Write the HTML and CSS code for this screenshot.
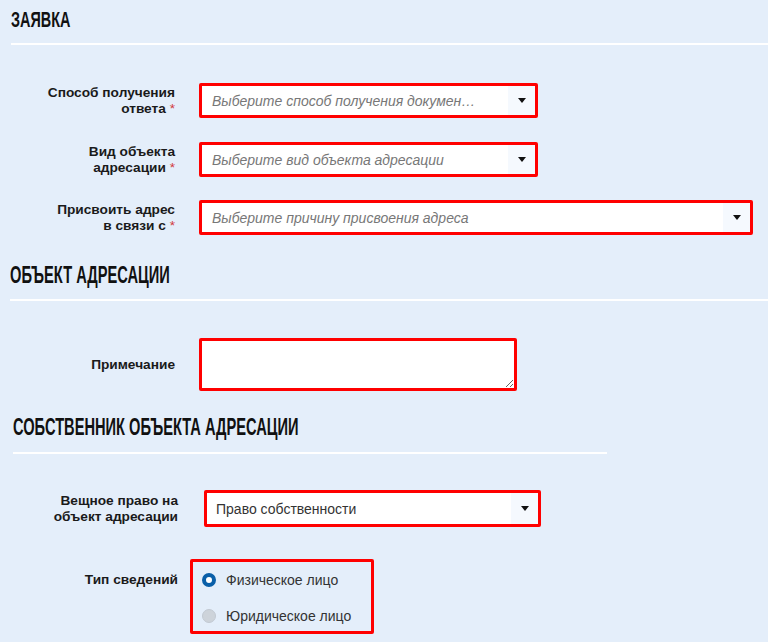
FILE: index.html
```html
<!DOCTYPE html>
<html lang="ru">
<head>
<meta charset="utf-8">
<link rel="stylesheet" href="styles.css">
</head>
<body>
<div class="page">
  <div class="section-head head-1">
    <div class="title t1">ЗАЯВКА</div>
    <div class="rule"></div>
  </div>

  <div class="form-row row-1">
    <div class="label">Способ получения<br>ответа <span class="req">*</span></div>
    <div class="select w-339">
      <span class="placeholder">Выберите способ получения докумен…</span>
      <span class="arrow"><span class="tri"></span></span>
    </div>
  </div>

  <div class="form-row row-2">
    <div class="label">Вид объекта<br>адресации <span class="req">*</span></div>
    <div class="select w-339">
      <span class="placeholder">Выберите вид объекта адресации</span>
      <span class="arrow"><span class="tri"></span></span>
    </div>
  </div>

  <div class="form-row row-3">
    <div class="label">Присвоить адрес<br>в связи с <span class="req">*</span></div>
    <div class="select w-554">
      <span class="placeholder">Выберите причину присвоения адреса</span>
      <span class="arrow"><span class="tri"></span></span>
    </div>
  </div>

  <div class="section-head head-2">
    <div class="title t2">ОБЪЕКТ АДРЕСАЦИИ</div>
    <div class="rule"></div>
  </div>

  <div class="form-row row-note">
    <div class="label">Примечание</div>
    <textarea class="note"></textarea>
  </div>

  <div class="section-head head-3">
    <div class="title t3">СОБСТВЕННИК ОБЪЕКТА АДРЕСАЦИИ</div>
    <div class="rule short"></div>
  </div>

  <div class="form-row row-4">
    <div class="label wide">Вещное право на<br>объект адресации</div>
    <div class="select w-337">
      <span class="value">Право собственности</span>
      <span class="arrow"><span class="tri"></span></span>
    </div>
  </div>

  <div class="form-row row-radio">
    <div class="label wide radio-label">Тип сведений</div>
    <div class="radio-box">
      <div class="radio-item"><span class="radio checked"></span><span class="radio-text">Физическое лицо</span></div>
      <div class="radio-item"><span class="radio"></span><span class="radio-text">Юридическое лицо</span></div>
    </div>
  </div>
</div>
</body>
</html>
```

FILE: styles.css
```css
html, body {
  margin: 0;
  padding: 0;
}
body {
  background: #e4eefa;
  font-family: "Liberation Sans", Arial, sans-serif;
  color: #222;
  width: 768px;
  height: 642px;
  overflow: hidden;
}
.page {
  padding-top: 8px;
}

/* section headings */
.section-head {
  margin-left: 11px;
}
.title {
  display: block;
  width: max-content;
  font-family: "Liberation Sans", Arial, sans-serif;
  font-weight: bold;
  color: #111;
  white-space: nowrap;
  transform-origin: left center;
}
.t1 {
  font-size: 22px;
  line-height: 24px;
  transform: scaleX(0.655);
}
.t2, .t3 {
  font-size: 24px;
  line-height: 26px;
  transform: scaleX(0.61);
}
.rule {
  height: 2px;
  background: #fff;
  margin-top: 11px;
}
.head-2 {
  margin-left: 10px;
  margin-top: 27px;
}
.head-3 {
  margin-left: 13px;
  margin-top: 23px;
}
.head-3 .rule {
  margin-top: 12px;
}
.rule.short {
  width: 594px;
}

/* rows */
.form-row {
  display: flex;
  align-items: center;
}
.row-1 { margin-top: 38px; }
.row-2 { margin-top: 24px; }
.row-3 { margin-top: 23px; }
.row-note { margin-top: 37px; }
.row-4 { margin-top: 36px; }
.row-radio { margin-top: 32px; align-items: flex-start; }

.label {
  width: 175px;
  margin-right: 24px;
  flex: none;
  text-align: right;
  font-weight: bold;
  font-size: 13.7px;
  line-height: 16px;
  color: #1a1a1a;
  white-space: nowrap;
}
.label.wide {
  width: 178px;
}
.row-4 .label { margin-right: 26px; }
.row-radio .label { margin-right: 12px; }
.radio-label {
  padding-top: 13px;
}
.req {
  color: #d23a3a;
  font-weight: normal;
}

/* select look-alike */
.select {
  box-sizing: border-box;
  height: 35px;
  border: 3px solid #ff0000;
  border-radius: 2px;
  background: #fff;
  display: flex;
  align-items: center;
  flex: none;
}
.w-339 { width: 339px; }
.w-554 { width: 554px; }
.w-337 { width: 337px; height: 37px; }
.placeholder {
  flex: 1;
  padding-left: 10px;
  font-size: 14px;
  font-style: italic;
  color: #777;
  white-space: nowrap;
  overflow: hidden;
}
.value {
  flex: 1;
  padding-left: 9px;
  font-size: 14px;
  color: #333;
  white-space: nowrap;
}
.arrow {
  width: 27px;
  align-self: stretch;
  background: #f5f9fe;
  display: flex;
  align-items: center;
  justify-content: center;
}
.tri {
  width: 0;
  height: 0;
  border-left: 4px solid transparent;
  border-right: 4px solid transparent;
  border-top: 5px solid #111;
}

/* textarea */
.note {
  box-sizing: border-box;
  display: block;
  width: 318px;
  height: 53px;
  margin: 0;
  border: 3px solid #ff0000;
  border-radius: 2px;
  background: #fff;
  padding: 4px;
  font-family: "Liberation Sans", Arial, sans-serif;
  font-size: 13px;
  resize: both;
  outline: none;
}

/* radios */
.radio-box {
  box-sizing: border-box;
  width: 184px;
  height: 75px;
  border: 3px solid #ff0000;
  border-radius: 2px;
  padding: 9px 0 0 9px;
}
.radio-item {
  display: flex;
  align-items: center;
  height: 18px;
  margin-bottom: 18px;
}
.radio {
  box-sizing: border-box;
  width: 14px;
  height: 14px;
  border-radius: 50%;
  background: #cdd3da;
  border: 1px solid #c2c9d2;
  margin-right: 10px;
  flex: none;
}
.radio.checked {
  background: #fff;
  border: 4px solid #0a5fa8;
}
.radio-text {
  font-size: 14px;
  color: #333;
}
```
